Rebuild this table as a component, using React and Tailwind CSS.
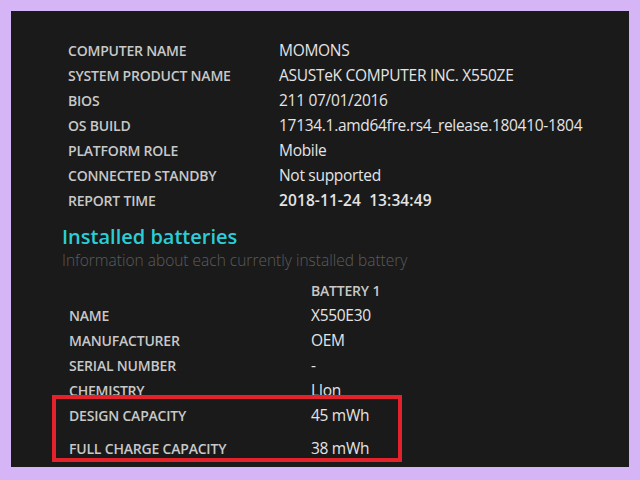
import React from "react";

const sys = [
  ["COMPUTER NAME", "MOMONS"],
  ["SYSTEM PRODUCT NAME", "ASUSTeK COMPUTER INC. X550ZE"],
  ["BIOS", "211 07/01/2016"],
  ["OS BUILD", "17134.1.amd64fre.rs4_release.180410-1804"],
  ["PLATFORM ROLE", "Mobile"],
  ["CONNECTED STANDBY", "Not supported"],
];

const bat = [
  ["NAME", "X550E30"],
  ["MANUFACTURER", "OEM"],
  ["SERIAL NUMBER", "-"],
  ["CHEMISTRY", "LIon"],
];

function Row({ label, value, labelW, h = "h-[25px]", valueClass = "font-normal tracking-[-0.3px]" }) {
  return (
    <div className={`flex items-center ${h}`}>
      <div className={`${labelW} shrink-0 text-[14px] font-semibold text-[#c8c8c8] tracking-[-0.2px]`}>{label}</div>
      <div className={`text-[15.5px] text-[#e4e4e4] ${valueClass}`}>{value}</div>
    </div>
  );
}

export default function App() {
  return (
    <div
      className="w-[640px] h-[480px] bg-[#d6b5f7] pt-[11px] pl-[11px]"
      style={{ fontFamily: '"Open Sans", "Noto Sans", sans-serif' }}
    >
      <div className="relative w-[618px] h-[456px] bg-[#1a1a1a] pt-[27px] pl-[57px]">
        {sys.map(([l, v]) => (
          <Row key={l} label={l} value={v} labelW="w-[211px]" />
        ))}
        <Row
          label="REPORT TIME"
          value="2018-11-24  13:34:49"
          labelW="w-[211px]"
          valueClass="font-semibold whitespace-pre tracking-[0.1px]"
        />

        <div className="-ml-[6px] mt-[10px] h-[28px] flex items-center text-[20px] font-semibold text-[#2ccdd6]">
          Installed batteries
        </div>
        <div className="-ml-[6px] h-[20px] flex items-center text-[15.5px] font-light text-[#5c5c5c]">
          Information about each currently installed battery
        </div>

        <div className="ml-[1px] mt-[7px]">
          <div className="flex items-center h-[25px]">
            <div className="w-[242px] shrink-0" />
            <div className="text-[14px] font-semibold text-[#c8c8c8] tracking-[-0.2px]">BATTERY 1</div>
          </div>
          {bat.map(([l, v]) => (
            <Row key={l} label={l} value={v} labelW="w-[242px]" />
          ))}
          <Row label="DESIGN CAPACITY" value="45 mWh" labelW="w-[242px]" h="h-[23px] mt-[1px]" />
          <Row label="FULL CHARGE CAPACITY" value="38 mWh" labelW="w-[242px]" h="h-[25px] mt-[9px]" />
        </div>

        <div className="absolute left-[41px] top-[384px] w-[350px] h-[67px] border-[4px] border-[#e3222b]" />
      </div>
    </div>
  );
}
